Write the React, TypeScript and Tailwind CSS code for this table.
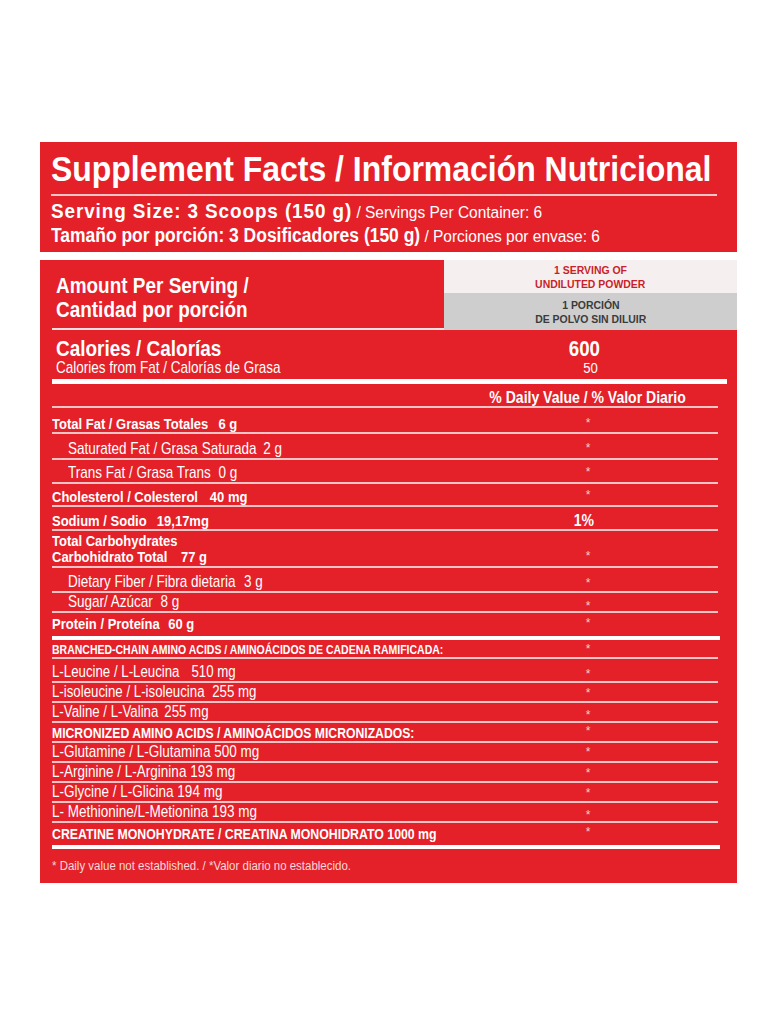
import type { ReactNode } from 'react';

const font = "[font-family:'Liberation_Sans',Arial,sans-serif]";

// condensed look: Liberation Sans squeezed horizontally
function Cond({ children, center }: { children: ReactNode; center?: boolean }) {
  return (
    <span className={`inline-block scale-x-[0.85] whitespace-nowrap ${center ? 'origin-center' : 'origin-left'}`}>
      {children}
    </span>
  );
}

type Row = {
  label: string;
  sub?: string;
  amount?: string;
  gap?: number;
  bold?: boolean;
  indent?: boolean;
  h: number;
  size: string;
  dv: string;
  star?: number;
  noLine?: boolean;
  pb?: string;
};

const rows: Row[] = [
  { label: 'Total Fat / Grasas Totales', amount: '6 g', gap: 12, bold: true, h: 26, size: 'text-[15.3px]', dv: '*', star: 9 },
  { label: 'Saturated Fat / Grasa Saturada', amount: '2 g', gap: 8, indent: true, h: 26, size: 'text-[15.9px]', dv: '*', star: 8 },
  { label: 'Trans Fat / Grasa Trans', amount: '0 g', gap: 9, indent: true, h: 24, size: 'text-[15.9px]', dv: '*', star: 6 },
  { label: 'Cholesterol / Colesterol', amount: '40 mg', gap: 14, bold: true, h: 23, size: 'text-[15.3px]', dv: '*', star: 5 },
  { label: 'Sodium / Sodio', amount: '19,17mg', gap: 12, bold: true, h: 24, size: 'text-[15.3px]', dv: '1%' },
  { label: 'Carbohidrato Total', sub: 'Total Carbohydrates', amount: '77 g', gap: 16, bold: true, h: 37, size: 'text-[15.3px]', dv: '*', star: 19 },
  { label: 'Dietary Fiber / Fibra dietaria', amount: '3 g', gap: 10, indent: true, h: 25, size: 'text-[15.9px]', dv: '*', star: 9 },
  { label: 'Sugar/ Azúcar', amount: '8 g', gap: 9, indent: true, h: 20, size: 'text-[15.9px]', dv: '*', star: 7 },
  { label: 'Protein / Proteína', amount: '60 g', gap: 10, bold: true, h: 23, size: 'text-[15.3px]', dv: '*', star: 4, noLine: true, pb: 'pb-[5px]' },
  { label: 'BRANCHED-CHAIN AMINO ACIDS / AMINOÁCIDOS DE CADENA RAMIFICADA:', bold: true, h: 19, size: 'text-[12.35px]', dv: '*', star: 3 },
  { label: 'L-Leucine / L-Leucina', amount: '510 mg', gap: 14, h: 24, size: 'text-[15.6px]', dv: '*', star: 9 },
  { label: 'L-isoleucine / L-isoleucina', amount: '255 mg', gap: 9, h: 20, size: 'text-[15.6px]', dv: '*', star: 4 },
  { label: 'L-Valine / L-Valina', amount: '255 mg', gap: 7, h: 20, size: 'text-[15.6px]', dv: '*', star: 6 },
  { label: 'MICRONIZED AMINO ACIDS / AMINOÁCIDOS MICRONIZADOS:', bold: true, h: 20, size: 'text-[14.35px]', dv: '*', star: 2 },
  { label: 'L-Glutamine / L-Glutamina 500 mg', h: 20, size: 'text-[15.9px]', dv: '*', star: 3 },
  { label: 'L-Arginine / L-Arginina 193 mg', h: 20, size: 'text-[15.9px]', dv: '*', star: 4 },
  { label: 'L-Glycine / L-Glicina 194 mg', h: 20, size: 'text-[15.9px]', dv: '*', star: 4 },
  { label: 'L- Methionine/L-Metionina 193 mg', h: 20, size: 'text-[15.9px]', dv: '*', star: 6 },
  { label: 'CREATINE MONOHYDRATE / CREATINA MONOHIDRATO 1000 mg', bold: true, h: 22, size: 'text-[14.5px]', dv: '*', star: 3, noLine: true, pb: 'pb-[4px]' },
];

function FactRow({ r }: { r: Row }) {
  return (
    <>
      <div
        className={`flex w-[666px] ${r.noLine ? '' : 'border-b-2 border-[#f4c4c6]'}`}
        style={{ height: r.h }}
      >
        <div
          className={`w-[480px] self-end whitespace-nowrap text-white ${r.pb ?? 'pb-[1px]'} ${r.size} ${r.bold ? 'font-bold' : ''} ${r.indent ? 'pl-[16px]' : ''} ${r.sub ? 'leading-[16px]' : 'leading-none'}`}
        >
          {r.sub && (
            <div>
              <Cond>{r.sub}</Cond>
            </div>
          )}
          <div>
            <Cond>
              {r.label}
              {r.amount && (
                <span className="inline-block" style={{ marginLeft: r.gap }}>
                  {r.amount}
                </span>
              )}
            </Cond>
          </div>
        </div>
        {r.dv === '*' ? (
          <div
            className="flex w-[112px] justify-center self-start text-[12px] leading-none text-[#f6cfd0]"
            style={{ paddingTop: r.star }}
          >
            *
          </div>
        ) : (
          <div className="flex w-[104px] justify-center self-end pb-[1px] text-[16.5px] font-bold leading-none text-white">
            <Cond center>{r.dv}</Cond>
          </div>
        )}
      </div>
      {r.noLine && <div className="h-[4px] w-[668px] bg-white" />}
    </>
  );
}

export default function App() {
  return (
    <div className={`min-h-screen bg-white pt-[142px] ${font}`}>
      <div className="ml-[40px] w-[697px]">
        {/* header */}
        <div className="h-[110px] bg-[#e42129] pl-[11px] pr-[20px] pt-[7px]">
          <h1 className="whitespace-nowrap text-[35px] font-bold leading-[40px] text-white">
            <span className="inline-block origin-left scale-x-[0.913]">Supplement Facts / Información Nutricional</span>
          </h1>
          <div className="mt-[5px] h-[2px] bg-[#f4c4c6]" />
          <div className="mt-[4px] whitespace-nowrap leading-[22px] text-white">
            <span className="inline-block origin-left scale-x-[0.9]">
              <span className="text-[21px] font-bold tracking-[1px]">Serving Size: 3 Scoops (150 g)</span>
              <span className="text-[17.2px]"> / Servings Per Container: 6</span>
            </span>
          </div>
          <div className="whitespace-nowrap leading-[22px] text-white">
            <span className="inline-block origin-left scale-x-[0.9]">
              <span className="text-[19.4px] font-bold">Tamaño por porción: 3 Dosificadores (150 g)</span>
              <span className="text-[17.2px]"> / Porciones por envase: 6</span>
            </span>
          </div>
        </div>

        {/* main */}
        <div className="mt-[8px] bg-[#e42129]">
          <div className="flex h-[70px]">
            <div className="flex w-[404px] flex-col">
              <div className="flex-1 pl-[16px] pt-[14px] text-[22.3px] font-bold leading-[24px] text-white">
                <div>
                  <Cond>Amount Per Serving /</Cond>
                </div>
                <div>
                  <Cond>Cantidad por porción</Cond>
                </div>
              </div>
              <div className="ml-[12px] h-[2px] bg-[#f7e1e2]" />
            </div>
            <div className="flex flex-1 flex-col text-center text-[11.6px] font-bold leading-[14px]">
              <div className="flex h-[33px] flex-col items-center justify-center bg-[#f6efef] text-[#c81f2a]">
                <span className="inline-block scale-x-[0.9]">1 SERVING OF</span>
                <span className="inline-block scale-x-[0.9]">UNDILUTED POWDER</span>
              </div>
              <div className="flex h-[37px] flex-col items-center justify-center bg-[#cecece] text-[#3b3b3b]">
                <span className="inline-block scale-x-[0.9]">1 PORCIÓN</span>
                <span className="inline-block scale-x-[0.9]">DE POLVO SIN DILUIR</span>
              </div>
            </div>
          </div>

          <div className="ml-[12px]">
            <div className="flex h-[49px] pt-[9px] text-white">
              <div className="w-[480px] pl-[4px]">
                <div className="text-[22.3px] font-bold leading-[20px]">
                  <Cond>Calories / Calorías</Cond>
                </div>
                <div className="text-[15.9px] leading-[17px]">
                  <Cond>Calories from Fat / Calorías de Grasa</Cond>
                </div>
              </div>
              <div className="flex w-[112px] flex-col items-center">
                <div className="pr-[8px] text-[22px] font-bold leading-[19px]">
                  <Cond center>600</Cond>
                </div>
                <div className="mt-[1px] pl-[6px] text-[15.5px] leading-[17px]">
                  <Cond center>50</Cond>
                </div>
              </div>
            </div>

            <div className="h-[5px] w-[675px] bg-white" />
            <div className="flex h-[24px] w-[666px] border-b-2 border-[#f4c4c6]">
              <div className="w-[480px]" />
              <div className="flex w-[112px] justify-center self-end whitespace-nowrap pb-[1px] text-[16.5px] font-bold leading-none text-white">
                <Cond center>% Daily Value / % Valor Diario</Cond>
              </div>
            </div>
            {rows.map((r, i) => (
              <FactRow key={i} r={r} />
            ))}
            <div className="h-[34px] pt-[10px] text-[13.5px] leading-none text-[#f7d9da]">
              <Cond>* Daily value not established. / *Valor diario no establecido.</Cond>
            </div>
          </div>
        </div>
      </div>
    </div>
  );
}
